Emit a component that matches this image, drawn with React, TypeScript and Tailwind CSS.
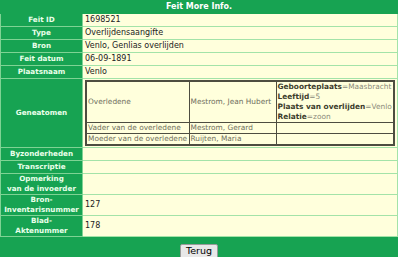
import React from "react";

type Row = { label: React.ReactNode; value?: React.ReactNode; tall?: boolean };

const font = { fontFamily: '"DejaVu Sans", Verdana, sans-serif' };

function Label({ children }: { children: React.ReactNode }) {
  return (
    <td className="border border-[#7fd394] bg-[#17a352] p-0 text-center align-middle text-[7.2px] leading-[10px] font-bold whitespace-nowrap text-[#eaffea]">
      {children}
    </td>
  );
}

function Value({ children }: { children?: React.ReactNode }) {
  return (
    <td className="border border-[#a3e3a8] bg-[#ffffdc] px-[2px] py-0 align-middle text-[8px] leading-[10px] text-[#222]">
      {children}
    </td>
  );
}

function Attr({ k, v }: { k: string; v: string }) {
  return (
    <div>
      <span className="font-bold text-[#3c3c2c]">{k}</span>
      <span className="text-[#8a8a7a]">={v}</span>
    </div>
  );
}

function Geneatomen() {
  const cell = "border border-[#4d4d40] px-[1px] py-0 text-[7.4px] leading-[10px] whitespace-nowrap text-[#6f6f60]";
  return (
    <table className="my-[1px] w-full table-fixed border-collapse border-2 border-[#4d4d40]">
      <colgroup>
        <col className="w-[103px]" />
        <col className="w-[87px]" />
        <col />
      </colgroup>
      <tbody>
        <tr>
          <td className={`${cell} h-[41px]`}>Overledene</td>
          <td className={cell}>Mestrom, Jean Hubert</td>
          <td className={`${cell} overflow-hidden text-[7.1px] leading-[10px]`}>
            <Attr k="Geboorteplaats" v="Maasbracht" />
            <Attr k="Leeftijd" v="5" />
            <Attr k="Plaats van overlijden" v="Venlo" />
            <Attr k="Relatie" v="zoon" />
          </td>
        </tr>
        <tr>
          <td className={cell}>Vader van de overledene</td>
          <td className={cell}>Mestrom, Gerard</td>
          <td className={cell}></td>
        </tr>
        <tr>
          <td className={cell}>Moeder van de overledene</td>
          <td className={cell}>Ruijten, Maria</td>
          <td className={cell}></td>
        </tr>
      </tbody>
    </table>
  );
}

const rows: Row[] = [
  { label: "Feit ID", value: "1698521" },
  { label: "Type", value: "Overlijdensaangifte" },
  { label: "Bron", value: "Venlo, Genlias overlijden" },
  { label: "Feit datum", value: "06-09-1891" },
  { label: "Plaatsnaam", value: "Venlo" },
  { label: "Geneatomen", value: <Geneatomen /> },
  { label: "Byzonderheden" },
  { label: "Transcriptie" },
  { label: <>Opmerking<br />van de invoerder</>, tall: true },
  { label: <>Bron-<br />Inventarisnummer</>, value: "127", tall: true },
  { label: <>Blad-<br />Aktenummer</>, value: "178", tall: true },
];

export default function App() {
  return (
    <div className="h-[257px] w-[400px] overflow-hidden bg-white" style={font}>
      <table className="w-[398px] table-fixed border-collapse border border-[#17a352] bg-[#17a352]">
        <colgroup>
          <col className="w-[82px]" />
          <col />
        </colgroup>
        <tbody>
          <tr>
            <td colSpan={2} className="h-[13px] border border-[#17a352] p-0 text-center text-[8px] leading-[10px] font-bold text-white">
              Feit More Info.
            </td>
          </tr>
          {rows.map((r, i) => (
            <tr key={i} className={r.tall ? "h-[21px]" : "h-[13px]"}>
              <Label>{r.label}</Label>
              <Value>{r.value}</Value>
            </tr>
          ))}
          <tr>
            <td colSpan={2} className="h-[19px] border border-[#17a352] p-0 text-center align-middle">
              <button className="h-[15px] rounded-[2px] border border-[#9a9a9a] bg-[#e8e8e8] px-[5px] text-[9.5px] leading-[12px] text-black">
                Terug
              </button>
            </td>
          </tr>
        </tbody>
      </table>
    </div>
  );
}
